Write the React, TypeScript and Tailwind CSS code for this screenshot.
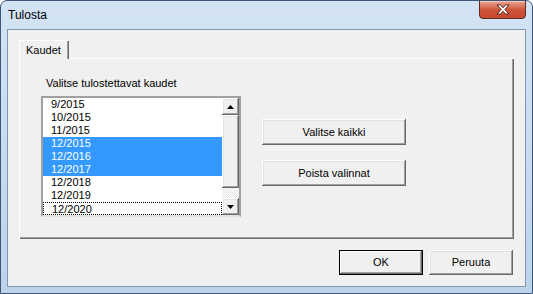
import React from 'react';

const raised =
  'shadow-[inset_-1px_-1px_0_#696969,inset_1px_1px_0_#ffffff,inset_-2px_-2px_0_#a0a0a0,inset_2px_2px_0_#e3e3e3]';

const periods = ['9/2015', '10/2015', '11/2015', '12/2015', '12/2016', '12/2017', '12/2018', '12/2019', '12/2020'];
const selected = ['12/2015', '12/2016', '12/2017'];

const ArrowUp = () => (
  <svg width="7" height="4" viewBox="0 0 7 4">
    <polygon points="3.5,0 7,4 0,4" fill="#000" />
  </svg>
);

const ArrowDown = () => (
  <svg width="7" height="4" viewBox="0 0 7 4">
    <polygon points="0,0 7,0 3.5,4" fill="#000" />
  </svg>
);

const App: React.FC = () => {
  return (
    <div className="w-[533px] h-[294px] bg-white font-['Liberation_Sans',Arial,sans-serif] text-black">
      <div className="w-full h-full flex flex-col rounded-t-[7px] border border-[#3d5678] bg-gradient-to-b from-[#d3e3f4] via-[#c8dcf0] to-[#bcd3ea] overflow-hidden">
        {/* title bar */}
        <div className="h-[28px] flex items-start justify-between shrink-0">
          <span className="pl-[7px] pt-[7px] text-[12px] leading-[14px]">Tulosta</span>
          <button className="-mt-px mr-[6px] w-[47px] h-[19px] flex items-center justify-center rounded-b-[4px] border border-[#5b2a21] bg-gradient-to-b from-[#e8a896] via-[#d0553d] to-[#c9482f] shadow-[inset_0_1px_0_#f3c7ba]">
            <svg width="14" height="11" viewBox="0 0 14 11">
              <polygon
                points="1,1 4.5,1 7,3.8 9.5,1 13,1 8.8,5.5 13,10 9.5,10 7,7.2 4.5,10 1,10 5.2,5.5"
                fill="#ffffff"
                stroke="#4a1c14"
                strokeWidth="0.9"
                strokeLinejoin="round"
              />
            </svg>
          </button>
        </div>

        {/* client area */}
        <div className="flex-1 mx-[6px] mb-[6px] border border-[#8196b1] bg-[#f0f0f0] flex flex-col pl-[11px] pr-[11px] pt-[10px] text-[11px]">
          {/* tab */}
          <div className="flex">
            <div className="relative z-10 -mb-px w-[50px] h-[19px] bg-[#f0f0f0] border-t border-l border-white shadow-[inset_-1px_0_0_#696969,inset_-2px_0_0_#a0a0a0] rounded-tl-[2px] flex items-center pl-[6px] leading-[13px]">
              Kaudet
            </div>
          </div>

          {/* tab panel */}
          <div className="h-[181px] border-t border-l border-white shadow-[inset_-1px_-1px_0_#696969,inset_-2px_-2px_0_#a0a0a0] pl-[21px] pt-[18px] flex flex-col">
            <span className="ml-[5px] leading-[13px]">Valitse tulostettavat kaudet</span>
            <div className="flex mt-[6px] items-start">
              {/* list box */}
              <div className="w-[200px] h-[121px] flex border-2 border-t-[#a0a0a0] border-l-[#a0a0a0] border-r-[#a0a0a0] border-b-[#e3e3e3] bg-white">
                <div className="w-[179px] flex flex-col">
                  {periods.map((p, i) => {
                    const sel = selected.includes(p);
                    const last = i === periods.length - 1;
                    return (
                      <div
                        key={p}
                        className={
                          'h-[13px] leading-[13px] pl-[8px] ' +
                          (sel ? 'bg-[#3399ff] text-white ' : '') +
                          (last ? 'border border-dotted border-black pl-[7px] leading-[11px]' : '')
                        }
                      >
                        {p}
                      </div>
                    );
                  })}
                </div>
                {/* scrollbar */}
                <div className="w-[17px] flex flex-col">
                  <div className={'h-[17px] bg-[#f0f0f0] flex items-center justify-center ' + raised}>
                    <ArrowUp />
                  </div>
                  <div className={'h-[73px] bg-[#f0f0f0] ' + raised}></div>
                  <div className="flex-1 bg-[image:repeating-conic-gradient(#ffffff_0_25%,#e3e3e3_0_50%)] bg-[length:2px_2px]"></div>
                  <div className={'h-[17px] bg-[#f0f0f0] flex items-center justify-center ' + raised}>
                    <ArrowDown />
                  </div>
                </div>
              </div>

              {/* side buttons */}
              <div className="ml-[21px] mt-[23px] flex flex-col gap-[15px]">
                <button className={'w-[144px] h-[26px] bg-[#f0f0f0] text-[11px] ' + raised}>Valitse kaikki</button>
                <button className={'w-[144px] h-[26px] bg-[#f0f0f0] text-[11px] ' + raised}>Poista valinnat</button>
              </div>
            </div>
          </div>

          {/* dialog buttons */}
          <div className="flex justify-end gap-[6px] mt-[11px] pr-[1px]">
            <button className="w-[84px] h-[25px] border border-black bg-[#f0f0f0] text-[11px] shadow-[inset_-1px_-1px_0_#696969,inset_1px_1px_0_#ffffff,inset_-2px_-2px_0_#a0a0a0]">
              OK
            </button>
            <button className={'w-[84px] h-[25px] bg-[#f0f0f0] text-[11px] ' + raised}>Peruuta</button>
          </div>
        </div>
      </div>
    </div>
  );
};

export default App;
